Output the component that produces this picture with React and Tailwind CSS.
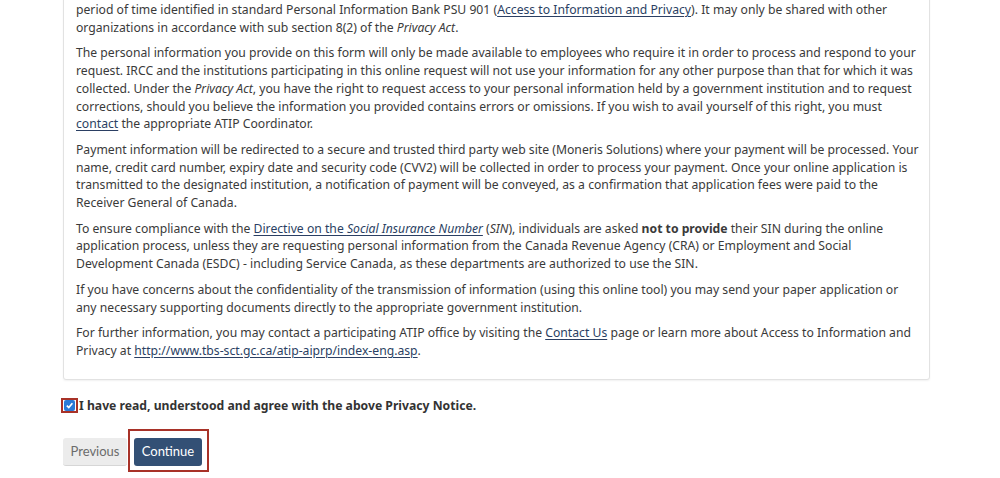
import React from 'react';

// link style used in the notice text
const A = ({ children }) => (
  <a href="#" className="text-[#2b3f63] underline underline-offset-2">{children}</a>
);

const App = () => {
  return (
    <div className="h-[478px] overflow-hidden bg-white pl-[63px] font-['Noto_Sans',sans-serif] text-[#3a3a3a]">
      {/* notice panel, top edge scrolled off screen */}
      <div className="-mt-[12px] w-[867px] rounded-[3px] border border-[#e2e2e2] bg-white pt-[12px] pr-[8px] pb-[11px] pl-[12px] text-[12.2px] leading-[17.7px] shadow-[0_1px_2px_rgba(0,0,0,0.06)]">
        <p className="mb-[8px]">
          period of time identified in standard Personal Information Bank PSU 901 (<A>Access to Information and Privacy</A>). It may only be shared with other organizations in accordance with sub section 8(2) of the <i>Privacy Act</i>.
        </p>
        <p className="mb-[8px]">
          The personal information you provide on this form will only be made available to employees who require it in order to process and respond to your request. IRCC and the institutions participating in this online request will not use your information for any other purpose than that for which it was collected. Under the <i>Privacy Act</i>, you have the right to request access to your personal information held by a government institution and to request corrections, should you believe the information you provided contains errors or omissions. If you wish to avail yourself of this right, you must <A>contact</A> the appropriate ATIP Coordinator.
        </p>
        <p className="mb-[8px]">
          Payment information will be redirected to a secure and trusted third party web site (Moneris Solutions) where your payment will be processed. Your name, credit card number, expiry date and security code (CVV2) will be collected in order to process your payment. Once your online application is transmitted to the designated institution, a notification of payment will be conveyed, as a confirmation that application fees were paid to the Receiver General of Canada.
        </p>
        <p className="mb-[8px]">
          To ensure compliance with the <A>Directive on the <i>Social Insurance Number</i></A> (<i>SIN</i>), individuals are asked <b>not to provide</b> their SIN during the online application process, unless they are requesting personal information from the Canada Revenue Agency (CRA) or Employment and Social Development Canada (ESDC) - including Service Canada, as these departments are authorized to use the SIN.
        </p>
        <p className="mb-[8px]">
          If you have concerns about the confidentiality of the transmission of information (using this online tool) you may send your paper application or any necessary supporting documents directly to the appropriate government institution.
        </p>
        <p className="mb-[8px]">
          For further information, you may contact a participating ATIP office by visiting the <A>Contact Us</A> page or learn more about Access to Information and Privacy at <A>http://www.tbs-sct.gc.ca/atip-aiprp/index-eng.asp</A>.
        </p>
      </div>

      {/* agreement checkbox */}
      <div className="mt-[17px] flex items-center">
        <span className="-ml-[2px] flex h-[15px] w-[17px] items-center justify-center border-2 border-[#a83228]">
          <span className="flex h-[11px] w-[11px] items-center justify-center rounded-[2px] bg-[#2a7ad8]">
            <svg width="9" height="9" viewBox="0 0 10 10">
              <path d="M2 5.2 L4.2 7.3 L8.2 2.6" fill="none" stroke="white" strokeWidth="1.8" />
            </svg>
          </span>
        </span>
        <span className="ml-[1px] text-[12.2px] font-bold leading-[18px] text-[#333]">
          I have read, understood and agree with the above Privacy Notice.
        </span>
      </div>

      {/* navigation buttons */}
      <div className="mt-[14px] flex items-center">
        <button className="mt-[4px] h-[28px] w-[64px] rounded-[3px] border-b border-[#d6d6d6] bg-[#ececec] font-['Lato',sans-serif] text-[13px] text-[#6b6b6b]">
          Previous
        </button>
        <div className="ml-[1px] border-2 border-[#a83228] pt-[7px] pr-[5px] pb-[4px] pl-[4px]">
          <button className="h-[28px] w-[68px] rounded-[3px] bg-[#335075] font-['Lato',sans-serif] text-[13px] text-white">
            Continue
          </button>
        </div>
      </div>
    </div>
  );
};

export default App;
